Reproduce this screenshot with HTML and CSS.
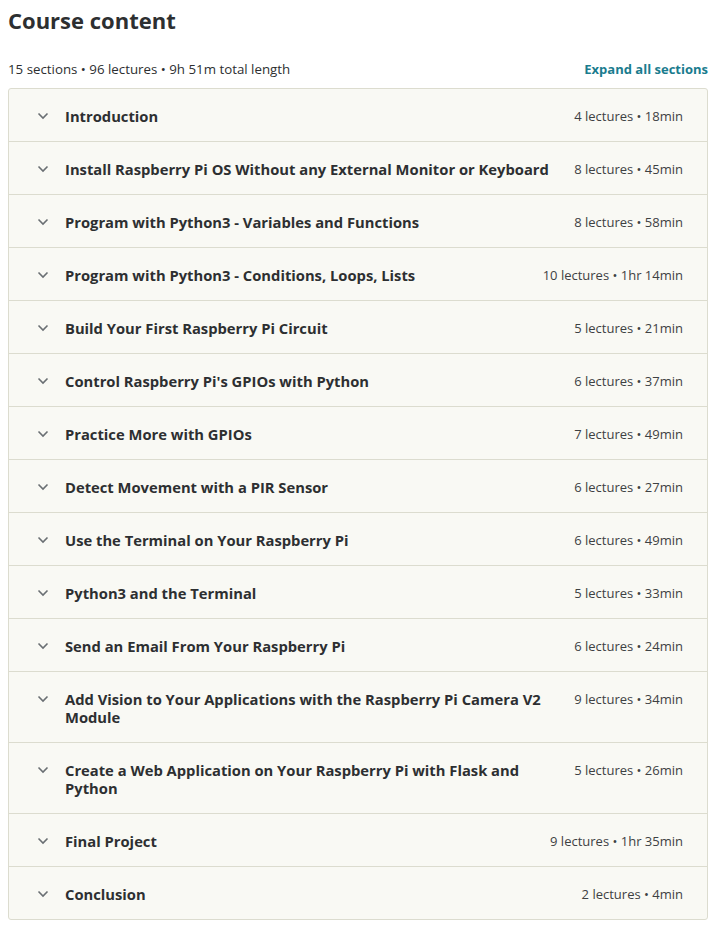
FILE: index.html
```html
<!DOCTYPE html>
<html lang="en">
<head>
    <meta charset="UTF-8">
    <meta name="viewport" content="width=device-width, initial-scale=1.0">
    <title>Course content</title>
    <link rel="stylesheet" href="styles.css">
</head>
<body>
    <div class="curriculum">
        <h2 class="title">Course content</h2>
        <div class="summary">
            <span>15 sections • 96 lectures • 9h 51m total length</span>
            <button class="expand-all">Expand all sections</button>
        </div>

        <div class="sections">
            <div class="section">
                <svg class="chevron" viewBox="0 0 12 8"><path d="M1.5 1.5 L6 6 L10.5 1.5"/></svg>
                <span class="section-title">Introduction</span>
                <span class="section-meta">4 lectures • 18min</span>
            </div>
            <div class="section">
                <svg class="chevron" viewBox="0 0 12 8"><path d="M1.5 1.5 L6 6 L10.5 1.5"/></svg>
                <span class="section-title">Install Raspberry Pi OS Without any External Monitor or Keyboard</span>
                <span class="section-meta">8 lectures • 45min</span>
            </div>
            <div class="section">
                <svg class="chevron" viewBox="0 0 12 8"><path d="M1.5 1.5 L6 6 L10.5 1.5"/></svg>
                <span class="section-title">Program with Python3 - Variables and Functions</span>
                <span class="section-meta">8 lectures • 58min</span>
            </div>
            <div class="section">
                <svg class="chevron" viewBox="0 0 12 8"><path d="M1.5 1.5 L6 6 L10.5 1.5"/></svg>
                <span class="section-title">Program with Python3 - Conditions, Loops, Lists</span>
                <span class="section-meta">10 lectures • 1hr 14min</span>
            </div>
            <div class="section">
                <svg class="chevron" viewBox="0 0 12 8"><path d="M1.5 1.5 L6 6 L10.5 1.5"/></svg>
                <span class="section-title">Build Your First Raspberry Pi Circuit</span>
                <span class="section-meta">5 lectures • 21min</span>
            </div>
            <div class="section">
                <svg class="chevron" viewBox="0 0 12 8"><path d="M1.5 1.5 L6 6 L10.5 1.5"/></svg>
                <span class="section-title">Control Raspberry Pi's GPIOs with Python</span>
                <span class="section-meta">6 lectures • 37min</span>
            </div>
            <div class="section">
                <svg class="chevron" viewBox="0 0 12 8"><path d="M1.5 1.5 L6 6 L10.5 1.5"/></svg>
                <span class="section-title">Practice More with GPIOs</span>
                <span class="section-meta">7 lectures • 49min</span>
            </div>
            <div class="section">
                <svg class="chevron" viewBox="0 0 12 8"><path d="M1.5 1.5 L6 6 L10.5 1.5"/></svg>
                <span class="section-title">Detect Movement with a PIR Sensor</span>
                <span class="section-meta">6 lectures • 27min</span>
            </div>
            <div class="section">
                <svg class="chevron" viewBox="0 0 12 8"><path d="M1.5 1.5 L6 6 L10.5 1.5"/></svg>
                <span class="section-title">Use the Terminal on Your Raspberry Pi</span>
                <span class="section-meta">6 lectures • 49min</span>
            </div>
            <div class="section">
                <svg class="chevron" viewBox="0 0 12 8"><path d="M1.5 1.5 L6 6 L10.5 1.5"/></svg>
                <span class="section-title">Python3 and the Terminal</span>
                <span class="section-meta">5 lectures • 33min</span>
            </div>
            <div class="section">
                <svg class="chevron" viewBox="0 0 12 8"><path d="M1.5 1.5 L6 6 L10.5 1.5"/></svg>
                <span class="section-title">Send an Email From Your Raspberry Pi</span>
                <span class="section-meta">6 lectures • 24min</span>
            </div>
            <div class="section">
                <svg class="chevron" viewBox="0 0 12 8"><path d="M1.5 1.5 L6 6 L10.5 1.5"/></svg>
                <span class="section-title">Add Vision to Your Applications with the Raspberry Pi Camera V2 Module</span>
                <span class="section-meta">9 lectures • 34min</span>
            </div>
            <div class="section">
                <svg class="chevron" viewBox="0 0 12 8"><path d="M1.5 1.5 L6 6 L10.5 1.5"/></svg>
                <span class="section-title">Create a Web Application on Your Raspberry Pi with Flask and Python</span>
                <span class="section-meta">5 lectures • 26min</span>
            </div>
            <div class="section">
                <svg class="chevron" viewBox="0 0 12 8"><path d="M1.5 1.5 L6 6 L10.5 1.5"/></svg>
                <span class="section-title">Final Project</span>
                <span class="section-meta">9 lectures • 1hr 35min</span>
            </div>
            <div class="section">
                <svg class="chevron" viewBox="0 0 12 8"><path d="M1.5 1.5 L6 6 L10.5 1.5"/></svg>
                <span class="section-title">Conclusion</span>
                <span class="section-meta">2 lectures • 4min</span>
            </div>
        </div>
    </div>
</body>
</html>
```

FILE: styles.css
```css
body {
    margin: 8px;
    font-family: "Open Sans", "Noto Sans", sans-serif;
    color: #2d2f31;
    background: #fff;
}
.curriculum {
    width: 700px;
}
.title {
    font-size: 22px;
    font-weight: bold;
    margin: 0;
    line-height: 24px;
}
.summary {
    display: flex;
    justify-content: space-between;
    align-items: center;
    margin-top: 27px;
    font-size: 13.3px;
    color: #2d2f31;
    height: 20px;
}
.expand-all {
    background: none;
    border: none;
    padding: 0;
    font-family: inherit;
    font-size: 13px;
    font-weight: bold;
    color: #1a7c8e;
    cursor: pointer;
}
.sections {
    margin-top: 9px;
    border: 1px solid #dcdccf;
    border-radius: 3px;
    background: #f9f9f4;
}
.section {
    display: flex;
    align-items: flex-start;
    padding: 18px 24px 16px 28px;
    border-bottom: 1px solid #dcdccf;
    line-height: 18px;
}
.section:last-child {
    border-bottom: none;
}
.chevron {
    width: 12px;
    height: 8px;
    margin-top: 5px;
    margin-right: 16px;
    flex-shrink: 0;
    fill: none;
    stroke: #6a6f73;
    stroke-width: 1.6;
}
.section-title {
    flex: 1;
    font-size: 14.75px;
    font-weight: bold;
}
.section-meta {
    margin-left: 24px;
    font-size: 13px;
    white-space: nowrap;
    color: #3e4143;
}
```
